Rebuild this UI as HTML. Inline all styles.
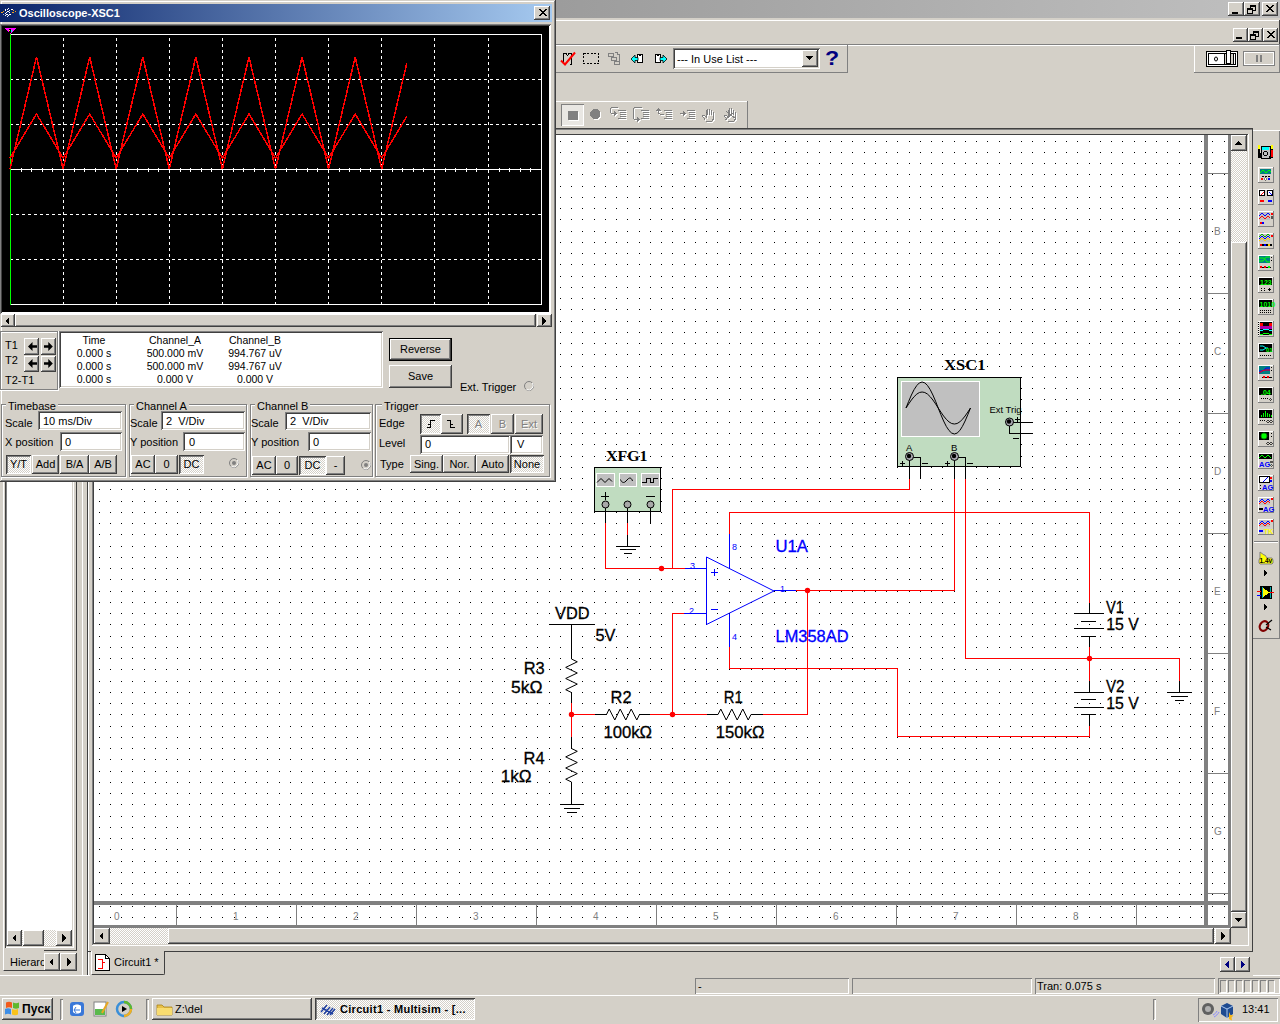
<!DOCTYPE html>
<html><head><meta charset="utf-8">
<style>
*{box-sizing:border-box;margin:0;padding:0}
html,body{width:1280px;height:1024px;overflow:hidden;background:#d4d0c8;font-family:"Liberation Sans",sans-serif;font-size:11px;color:#000;position:relative}
.a{position:absolute}
.btn{position:absolute;background:#d4d0c8;box-shadow:inset -1px -1px #404040,inset 1px 1px #fff,inset -2px -2px #808080,inset 2px 2px #d4d0c8}
.sunk{position:absolute;background:#fff;box-shadow:inset 1px 1px #808080,inset -1px -1px #fff,inset 2px 2px #404040,inset -2px -2px #d4d0c8}
.tb{position:absolute;background:#d4d0c8;box-shadow:inset -1px -1px #808080,inset 1px 1px #fff}
.chk{background-color:#e6e3de;background-image:repeating-conic-gradient(#d4d0c8 0 25%,#fff 0 50%);background-size:2px 2px}
svg{position:absolute;overflow:visible}
</style></head><body>

<!-- ===== MAIN WINDOW ===== -->
<div class="a" style="left:0;top:0;width:1280px;height:18px;background:linear-gradient(to right,#808080,#c0c0c0)"></div>
<div class="a" style="left:0;top:20px;width:1280px;height:1px;background:#fff"></div>
<div class="a" style="left:1279px;top:20px;width:1px;height:25px;background:#404040"></div>
<!-- title buttons -->
<div class="btn" style="left:1228px;top:2px;width:16px;height:14px"></div>
<div class="btn" style="left:1244px;top:2px;width:16px;height:14px"></div>
<div class="btn" style="left:1262px;top:2px;width:16px;height:14px"></div>
<svg style="left:1228px;top:2px" width="50" height="14" shape-rendering="crispEdges" fill="#000">
 <path d="M4 10h6v2h-6z"/>
 <path d="M22 3h6v2h-6zM27 5h1v4h-1zM25 8h2v1h-2zM22 5h1v1h-1zM19 6h6v2h-6zM19 8h1v4h-1zM24 8h1v4h-1zM19 11h6v1h-6z"/>
 <path d="M38 3h2v1h-2zM44 3h2v1h-2zM39 4h2v1h-2zM43 4h2v1h-2zM40 5h4v1h-4zM41 6h2v1h-2zM40 7h4v1h-4zM39 8h2v1h-2zM43 8h2v1h-2zM38 9h2v1h-2zM44 9h2v1h-2z"/>
</svg>
<!-- mdi buttons -->
<div class="btn" style="left:1233px;top:28px;width:15px;height:14px"></div>
<div class="btn" style="left:1248px;top:28px;width:15px;height:14px"></div>
<div class="btn" style="left:1263px;top:28px;width:15px;height:14px"></div>
<svg style="left:1233px;top:28px" width="45" height="14" shape-rendering="crispEdges" fill="#000">
 <path d="M3 9h6v2h-6z"/>
 <path d="M20 3h6v2h-6zM25 5h1v4h-1zM23 8h2v1h-2zM20 5h1v1h-1zM17 6h6v2h-6zM17 8h1v4h-1zM22 8h1v4h-1zM17 11h6v1h-6z"/>
 <path d="M34 3h2v1h-2zM40 3h2v1h-2zM35 4h2v1h-2zM39 4h2v1h-2zM36 5h4v1h-4zM37 6h2v1h-2zM36 7h4v1h-4zM35 8h2v1h-2zM39 8h2v1h-2zM34 9h2v1h-2zM40 9h2v1h-2z"/>
</svg>

<div class="a" style="left:0;top:44px;width:1280px;height:1px;background:#808080"></div>
<div class="a" style="left:0;top:45px;width:1280px;height:1px;background:#fff"></div>
<!-- toolbar 1 -->
<div class="tb" style="left:540px;top:45px;width:308px;height:28px"></div>
<div class="sunk" style="left:673px;top:48px;width:147px;height:21px"></div>
<div class="a" style="left:677px;top:53px;line-height:13px">--- In Use List ---</div>
<div class="btn" style="left:802px;top:50px;width:16px;height:17px"></div>
<svg style="left:806px;top:56px" width="8" height="5" shape-rendering="crispEdges"><path d="M0 0h7L3.5 4z" fill="#000"/></svg>
<div class="a" style="left:825px;top:47px;font-size:21px;font-weight:bold;color:#000080;line-height:22px;transform:scaleX(1.1);transform-origin:left">?</div>
<div class="tb" style="left:1194px;top:45px;width:86px;height:28px"></div>
<!-- toolbar 2 -->
<div class="tb" style="left:540px;top:101px;width:208px;height:28px"></div>
<div class="a" style="left:561px;top:104px;width:23px;height:22px;background:#e9e7e3;box-shadow:inset 1px 1px #808080,inset -1px -1px #fff"></div>
<div class="a" style="left:568px;top:111px;width:10px;height:9px;background:#808080;box-shadow:1px 1px #fff"></div>
<svg style="left:588px;top:106px" width="16" height="16" shape-rendering="crispEdges"><path d="M6 4h4l3 3v4l-3 3h-4l-3-3v-4z" fill="#fff"/><path d="M5 3h4l3 3v4l-3 3h-4l-3-3v-4z" fill="#808080"/></svg>

<div class="a" style="left:88px;top:128px;width:1164px;height:1px;background:#404040"></div>
<div class="a" style="left:88px;top:129px;width:1164px;height:1px;background:#808080"></div>
<div class="a" style="left:88px;top:134px;width:1160px;height:1px;background:#404040"></div>

<!-- canvas frame -->
<div class="a" style="left:88px;top:128px;width:1px;height:847px;background:#fff"></div>
<div class="a" style="left:92px;top:134px;width:1px;height:811px;background:#808080"></div>
<div class="a" style="left:93px;top:134px;width:1px;height:810px;background:#404040"></div>
<div class="a" style="left:94px;top:135px;width:1137px;height:792px;background:#fff"></div>
<svg style="left:0;top:0" width="1280" height="1024" shape-rendering="crispEdges">
<defs><pattern id="gd" width="45" height="45" patternUnits="userSpaceOnUse" x="9" y="6">
<path d="M0 0h1v1h-1zM11 0h1v1h-1zM22 0h1v1h-1zM33 0h1v1h-1zM0 11h1v1h-1zM11 11h1v1h-1zM22 11h1v1h-1zM33 11h1v1h-1zM0 22h1v1h-1zM11 22h1v1h-1zM22 22h1v1h-1zM33 22h1v1h-1zM0 33h1v1h-1zM11 33h1v1h-1zM22 33h1v1h-1zM33 33h1v1h-1z" fill="#000"/>
</pattern></defs>
<rect x="94" y="135" width="1137" height="792" fill="url(#gd)"/>
<g fill="#808080">
 <rect x="94" y="901" width="1137" height="4"/>
 <rect x="1204" y="135" width="4" height="792"/>
 <rect x="94" y="925" width="1137" height="3"/>
 <rect x="1228" y="135" width="3" height="792"/>
</g>
<g stroke="#808080" stroke-width="1">
 <path d="M176.5 905V925M296.5 905V925M416.5 905V925M536.5 905V925M656.5 905V925M776.5 905V925M896.5 905V925M1016.5 905V925M1136.5 905V925"/>
 <path d="M1208 173.5H1229M1208 293.5H1229M1208 413.5H1229M1208 533.5H1229M1208 653.5H1229M1208 773.5H1229M1208 893.5H1229"/>
</g>
</svg>
<div class="a" style="left:0;top:910px;font-size:10px;line-height:13px;color:#808080">
 <span class="a" style="left:114px">0</span><span class="a" style="left:233px">1</span><span class="a" style="left:353px">2</span><span class="a" style="left:473px">3</span><span class="a" style="left:593px">4</span><span class="a" style="left:713px">5</span><span class="a" style="left:833px">6</span><span class="a" style="left:953px">7</span><span class="a" style="left:1073px">8</span>
</div>
<div class="a" style="left:1214px;top:0;font-size:10px;line-height:13px;color:#808080">
 <span class="a" style="top:225px">B</span><span class="a" style="top:345px">C</span><span class="a" style="top:465px">D</span><span class="a" style="top:585px">E</span><span class="a" style="top:705px">F</span><span class="a" style="top:825px">G</span>
</div>
<!-- vscroll -->
<div class="a chk" style="left:1231px;top:135px;width:16px;height:792px"></div>
<div class="btn" style="left:1231px;top:135px;width:16px;height:16px"></div>
<svg style="left:1235px;top:141px" width="8" height="5" shape-rendering="crispEdges"><path d="M0 4h7L3.5 0z" fill="#000"/></svg>
<div class="btn" style="left:1231px;top:242px;width:16px;height:670px"></div>
<div class="btn" style="left:1231px;top:912px;width:16px;height:16px"></div>
<svg style="left:1235px;top:918px" width="8" height="5" shape-rendering="crispEdges"><path d="M0 0h7L3.5 4z" fill="#000"/></svg>
<!-- hscroll -->
<div class="a chk" style="left:94px;top:928px;width:1137px;height:16px"></div>
<div class="btn" style="left:94px;top:928px;width:16px;height:16px"></div>
<svg style="left:99px;top:932px" width="5" height="8" shape-rendering="crispEdges"><path d="M4 0v8L0 4z" fill="#000"/></svg>
<div class="btn" style="left:168px;top:928px;width:1046px;height:16px"></div>
<div class="btn" style="left:1215px;top:928px;width:16px;height:16px"></div>
<svg style="left:1221px;top:932px" width="5" height="8" shape-rendering="crispEdges"><path d="M0 0v8L4 4z" fill="#000"/></svg>
<div class="a" style="left:1231px;top:928px;width:17px;height:17px;background:#d4d0c8"></div>
<div class="a" style="left:1248px;top:134px;width:1px;height:811px;background:#fff"></div>
<div class="a" style="left:92px;top:945px;width:1157px;height:1px;background:#fff"></div>
<div class="a" style="left:1252px;top:128px;width:1px;height:824px;background:#404040"></div>
<div class="a" style="left:88px;top:951px;width:1165px;height:1px;background:#404040"></div>

<!-- ===== CIRCUIT ===== -->
<svg style="left:0;top:0" width="1280" height="1024">
 <!-- wires -->
 <g fill="none" stroke="#f00" stroke-width="1" shape-rendering="crispEdges">
  <path d="M605.5 523V568.5H685"/>
  <path d="M627.5 523V535"/>
  <path d="M909.5 479V489.5H672.5V568.5"/>
  <path d="M729.5 534V512.5H1089.5V603"/>
  <path d="M796 590.5H954.5V479"/>
  <path d="M807.5 590.5V714.5H763"/>
  <path d="M965.5 479V658.5H1179.5V681"/>
  <path d="M729.5 647V668.5H897.5V736.5H1089.5V726"/>
  <path d="M1089.5 647V681"/>
  <path d="M684 613.5H672.5V714.5"/>
  <path d="M650 714.5H707"/>
  <path d="M571.5 703V737"/>
  <path d="M571.5 714.5H595"/>
 </g>
 <g fill="#f00">
  <circle cx="661.5" cy="568.5" r="2.7"/>
  <circle cx="807.5" cy="590.5" r="2.7"/>
  <circle cx="672.5" cy="714.5" r="2.7"/>
  <circle cx="571.5" cy="714.5" r="2.7"/>
  <circle cx="1089.5" cy="658.5" r="2.7"/>
 </g>
 <!-- XFG1 box -->
 <rect x="594.5" y="467.5" width="66" height="44" fill="#c0dcc0" stroke="#000" shape-rendering="crispEdges"/>
 <g shape-rendering="crispEdges" fill="#c0c0c0" stroke="#fff">
  <rect x="596.5" y="473.5" width="18" height="13"/><rect x="619.5" y="473.5" width="17" height="13"/><rect x="641.5" y="473.5" width="18" height="13"/>
 </g>
 <!-- XSC1 box -->
 <rect x="897.5" y="377.5" width="123" height="89" fill="#c0dcc0" stroke="#000" shape-rendering="crispEdges"/>
 <rect x="901.5" y="381.5" width="78" height="55" fill="#c0c0c0" stroke="#fff" shape-rendering="crispEdges"/>
 <!-- black component leads -->
 <g fill="none" stroke="#000" stroke-width="1" shape-rendering="crispEdges">
  <path d="M605.5 504V523M627.5 504V523M650.5 504V523M627.5 535V546"/>
  <path d="M616 546.5H640M620 549.5H636M624 553.5H632"/>
  <path d="M549 624.5H595M571.5 624.5V659M571.5 692.5V703M571.5 737V748.5M571.5 782V804.5"/>
  <path d="M560 804.5H584M564 808.5H580M567 812.5H577"/>
  <path d="M595 714.5H606.5M639.5 714.5H650M707 714.5H718M751 714.5H763"/>
  <path d="M1089.5 603V613.5M1074 613.5H1104M1081 621.5H1096M1074 628.5H1104M1081 636.5H1096M1089.5 636.5V647"/>
  <path d="M1089.5 681V692.5M1074 692.5H1104M1081 699.5H1096M1074 707.5H1104M1081 714.5H1096M1089.5 714.5V726"/>
  <path d="M1179.5 681V692.5M1167 692.5H1192M1171 696.5H1188M1175 700.5H1184"/>
  <path d="M909.5 457V479M920.5 479V457.5H912M954.5 457V479M965.5 479V457.5H957"/>
  <path d="M1010 422.5H1033M1009.5 422V433.5H1033"/>
 </g>
 <g fill="none" stroke="#000" stroke-width="1">
  <polyline points="606.5,714.5 609.2,709.0 614.8,720.0 620.2,709.0 625.8,720.0 631.2,709.0 636.8,720.0 639.5,714.5"/>
  <polyline points="718.0,714.5 720.8,709.0 726.2,720.0 731.8,709.0 737.2,720.0 742.8,709.0 748.2,720.0 751.0,714.5"/>
  <polyline points="571.5,659.0 577.3,661.8 565.7,667.4 577.3,673.0 565.7,678.5 577.3,684.1 565.7,689.7 571.5,692.5"/>
  <polyline points="571.5,748.5 577.3,751.3 565.7,756.9 577.3,762.5 565.7,768.0 577.3,773.6 565.7,779.2 571.5,782.0"/>
 </g>
 <!-- op amp -->
 <g fill="none" stroke="#00f" stroke-width="1">
  <path d="M706.5 557V624.5L774 591z"/>
  <path shape-rendering="crispEdges" d="M685 568.5H706.5M684 613.5H706.5M729.5 534V568M729.5 614V647M774 590.5H796M711 572.5H718M714.5 569V576M711 609.5H718"/>
 </g>
 <g fill="#00f" font-family="Liberation Sans" font-size="9px">
  <text x="690" y="569">3</text><text x="689" y="613.5">2</text><text x="732" y="550">8</text><text x="732" y="640">4</text><text x="780" y="591.5">1</text>
 </g>
 <g fill="#00f" stroke="#00f" stroke-width="0.3" font-family="Liberation Sans" font-size="16.5px">
  <text x="775.5" y="551.5" textLength="32.5" lengthAdjust="spacingAndGlyphs">U1A</text><text x="775.5" y="641.5" textLength="73" lengthAdjust="spacingAndGlyphs">LM358AD</text>
 </g>
 <g fill="#000" stroke="#000" stroke-width="0.3" font-family="Liberation Sans" font-size="16.5px">
  <text x="555" y="618.5" textLength="34.5" lengthAdjust="spacingAndGlyphs">VDD</text>
  <text x="595.5" y="641" textLength="20" lengthAdjust="spacingAndGlyphs">5V</text>
  <text x="523.7" y="673.6" textLength="21" lengthAdjust="spacingAndGlyphs">R3</text>
  <text x="511" y="692.7" textLength="31.5" lengthAdjust="spacingAndGlyphs">5kΩ</text>
  <text x="523.6" y="763.9" textLength="21" lengthAdjust="spacingAndGlyphs">R4</text>
  <text x="500.7" y="782" textLength="31" lengthAdjust="spacingAndGlyphs">1kΩ</text>
  <text x="610.6" y="703.4" textLength="21" lengthAdjust="spacingAndGlyphs">R2</text>
  <text x="603.4" y="737.5" textLength="48.7" lengthAdjust="spacingAndGlyphs">100kΩ</text>
  <text x="723.8" y="703.4" textLength="19" lengthAdjust="spacingAndGlyphs">R1</text>
  <text x="715.7" y="737.5" textLength="48.7" lengthAdjust="spacingAndGlyphs">150kΩ</text>
  <text x="1106" y="613.2" textLength="18" lengthAdjust="spacingAndGlyphs">V1</text>
  <text x="1106.2" y="629.8" textLength="32.6" lengthAdjust="spacingAndGlyphs">15 V</text>
  <text x="1106" y="692" textLength="18.5" lengthAdjust="spacingAndGlyphs">V2</text>
  <text x="1106.2" y="708.6" textLength="32.6" lengthAdjust="spacingAndGlyphs">15 V</text>
 </g>
 <!-- XFG1 -->
 <text x="606" y="460.5" font-family="Liberation Serif" font-weight="bold" font-size="14.5px" textLength="41.5" lengthAdjust="spacingAndGlyphs">XFG1</text>
 <g fill="none" stroke="#000" stroke-width="1">
  <path d="M597 482.5l4-4l4 4l4-4l3 3"/>
  <path d="M620.5 479.5c1 3 3 3.5 4.5 2.5l3-3c1.5-1.5 3.5-1.5 4.5 2"/>
  <path shape-rendering="crispEdges" d="M642 482.5h4.5v-4h3.5v4h3v-4h4.5"/>
  <path shape-rendering="crispEdges" d="M601 496.5h8M605.5 492v8M646 496.5h9"/>
 </g>
 <g fill="#a8a8a8" stroke="#000" stroke-width="1">
  <circle cx="605.5" cy="504.5" r="3.5"/><circle cx="627.5" cy="504.5" r="3.5"/><circle cx="650.5" cy="504.5" r="3.5"/>
 </g>
 <!-- XSC1 -->
 <text x="944" y="370" font-family="Liberation Serif" font-weight="bold" font-size="14.5px" textLength="41.5" lengthAdjust="spacingAndGlyphs">XSC1</text>
 <g fill="none" stroke="#000" stroke-width="1">
  <polyline points="906.0,408.0 908.7,401.3 911.4,395.0 914.1,389.6 916.8,385.5 919.4,382.9 922.1,382.0 924.8,382.9 927.5,385.5 930.2,389.6 932.9,395.0 935.6,401.3 938.2,408.0 940.9,414.7 943.6,421.0 946.3,426.4 949.0,430.5 951.7,433.1 954.4,434.0 957.1,433.1 959.8,430.5 962.4,426.4 965.1,421.0 967.8,414.7 970.5,408.0"/>
  <polyline points="906.0,408.0 908.7,403.9 911.4,400.0 914.1,396.7 916.8,394.1 919.4,392.5 922.1,392.0 924.8,392.5 927.5,394.1 930.2,396.7 932.9,400.0 935.6,403.9 938.2,408.0 940.9,412.1 943.6,416.0 946.3,419.3 949.0,421.9 951.7,423.5 954.4,424.0 957.1,423.5 959.8,421.9 962.4,419.3 965.1,416.0 967.8,412.1 970.5,408.0"/>
 </g>
 <g font-family="Liberation Sans" font-size="9.5px" fill="#000">
  <text x="989.5" y="412.5" textLength="32" lengthAdjust="spacingAndGlyphs">Ext Trig</text>
  <text x="906" y="451">A</text><text x="951" y="451">B</text>
 </g>
 <g fill="none" stroke="#000" stroke-width="1" shape-rendering="crispEdges">
  <path d="M900 463.5h5M902.5 461v5M922 463.5h6M945 463.5h5M947.5 461v5M967 463.5h6M1015 419.5h5M1017.5 417v5M1013 438.5h6"/>
 </g>
 <g fill="#a8a8b0" stroke="#000" stroke-width="1">
  <circle cx="909.5" cy="456.5" r="4"/><circle cx="954.5" cy="456.5" r="4"/><circle cx="1009.5" cy="422" r="4"/>
 </g>
 <g fill="#000"><circle cx="909" cy="456" r="2.2"/><circle cx="954" cy="456" r="2.2"/><circle cx="1009" cy="421.5" r="2.2"/></g>
</svg>

<!-- right instrument toolbar -->
<div class="a" style="left:1253px;top:130px;width:27px;height:509px;box-shadow:inset 0 1px #fff,inset -1px -1px #808080"></div>

<!-- left panel -->
<div class="a" style="left:0;top:481px;width:77px;height:470px;box-shadow:inset -1px 0 #404040,inset 3px 0 #d4d0c8,inset 4px 0 #fff"></div>
<div class="a" style="left:43px;top:950px;width:34px;height:1px;background:#404040"></div>
<div class="sunk" style="left:5px;top:481px;width:69px;height:467px;box-shadow:inset 1px 0 #404040,inset -1px -1px #fff,inset -2px -2px #d4d0c8,inset 2px 0 #808080"></div>
<div class="a chk" style="left:7px;top:930px;width:64px;height:16px"></div>
<div class="btn" style="left:7px;top:930px;width:15px;height:16px"></div>
<svg style="left:12px;top:934px" width="5" height="8" shape-rendering="crispEdges"><path d="M4 0v8L0 4z" fill="#000"/></svg>
<div class="btn" style="left:23px;top:930px;width:21px;height:16px"></div>
<div class="btn" style="left:56px;top:930px;width:16px;height:16px"></div>
<svg style="left:62px;top:934px" width="5" height="8" shape-rendering="crispEdges"><path d="M0 0v8L4 4z" fill="#000"/></svg>
<div class="a" style="left:3px;top:950px;width:41px;height:21px;background:#d4d0c8;border-bottom:1px solid #404040;border-left:1px solid #fff"></div>
<div class="a" style="left:10px;top:956px;line-height:13px;width:34px;overflow:hidden;white-space:nowrap">Hierarchy</div>
<div class="btn" style="left:44px;top:953px;width:16px;height:18px"></div>
<svg style="left:49px;top:958px" width="5" height="8" shape-rendering="crispEdges"><path d="M4 0v8L0 4z" fill="#000"/></svg>
<div class="btn" style="left:60px;top:953px;width:17px;height:18px"></div>
<svg style="left:67px;top:958px" width="5" height="8" shape-rendering="crispEdges"><path d="M0 0v8L4 4z" fill="#000"/></svg>
<!-- splitter -->
<div class="a" style="left:82px;top:481px;width:1px;height:494px;background:#fff"></div>
<div class="a" style="left:87px;top:481px;width:1px;height:494px;background:#404040"></div>

<!-- tabs -->
<div class="a" style="left:91px;top:951px;width:74px;height:24px;background:#d4d0c8;border-right:1px solid #404040;border-bottom:1px solid #404040;border-left:1px solid #fff;border-bottom-right-radius:2px"></div>
<div class="a" style="left:114px;top:956px;line-height:13px">Circuit1 *</div>
<svg style="left:95px;top:954px" width="16" height="18" shape-rendering="crispEdges"><path d="M0.5 0.5h10l4 4v12h-14z" fill="#fff" stroke="#000"/><path d="M10.5 0.5v4h4" fill="none" stroke="#000"/><path d="M2.5 5.5h5v9h-5M8 8h2" stroke="#f00" fill="none"/></svg>
<div class="btn" style="left:1220px;top:957px;width:15px;height:15px"></div>
<svg style="left:1225px;top:960px" width="5" height="9" shape-rendering="crispEdges"><path d="M4 0v9L0 4.5z" fill="#000080"/></svg>
<div class="btn" style="left:1235px;top:957px;width:15px;height:15px"></div>
<svg style="left:1241px;top:960px" width="5" height="9" shape-rendering="crispEdges"><path d="M0 0v9L4 4.5z" fill="#000080"/></svg>
<div class="a" style="left:0;top:975px;width:90px;height:1px;background:#fff"></div>
<div class="a" style="left:1253px;top:975px;width:27px;height:1px;background:#fff"></div>

<!-- status bar -->
<div class="a" style="left:695px;top:978px;width:154px;height:16px;box-shadow:inset 1px 1px #808080,inset -1px -1px #fff"></div>
<div class="a" style="left:698px;top:980px;line-height:13px">-</div>
<div class="a" style="left:852px;top:978px;width:180px;height:16px;box-shadow:inset 1px 1px #808080,inset -1px -1px #fff"></div>
<div class="a" style="left:1035px;top:978px;width:180px;height:16px;box-shadow:inset 1px 1px #808080,inset -1px -1px #fff"></div>
<div class="a" style="left:1037px;top:980px;line-height:13px">Tran: 0.075 s</div>
<div class="a" style="left:1218px;top:978px;width:62px;height:16px;box-shadow:inset 1px 1px #808080,inset -1px -1px #fff"></div>
<svg style="left:1220px;top:980px" width="60" height="13" shape-rendering="crispEdges"><g fill="none" stroke-width="1"><path d="M0.5 12V0.5H6M8.5 12V0.5H14M16.5 12V0.5H22M24.5 12V0.5H30M32.5 12V0.5H38M40.5 12V0.5H46M48.5 12V0.5H54" stroke="#808080"/><path d="M6.5 1V12.5H1M14.5 1V12.5H9M22.5 1V12.5H17M30.5 1V12.5H25M38.5 1V12.5H33M46.5 1V12.5H41M54.5 1V12.5H49" stroke="#fff"/></g></svg>

<!-- toolbar icons -->
<svg style="left:556px;top:48px" width="120" height="22" shape-rendering="crispEdges">
 <path d="M7.5 16V5.5h2.5l1.5 2 1.5-2h2.5V16h-2" fill="none" stroke="#000"/>
 <path d="M5 12.5l4 4l10-12" fill="none" stroke="#f00" stroke-width="2" shape-rendering="auto"/>
 <path d="M27.5 5.5h15v10h-15z" fill="none" stroke="#000" stroke-dasharray="2 1.5"/>
 <g fill="none" stroke="#808080"><path d="M52.5 5.5h5v3h-5zM55.5 9.5h5v3h-5zM58.5 13.5h5v3h-5zM59 4.5h2.5v2h2v6"/></g>
 <g fill="#fff" stroke="#000"><path d="M81.5 6.5h1.5l1 1.5 1-1.5h1.5v8h-5z"/><path d="M99.5 6.5h1.5l1 1.5 1-1.5h1.5v8h-5z"/></g>
 <path d="M75 11l4-4v2.5h3v3h-3V15z" fill="#0ff" stroke="#000" stroke-width="0.8" shape-rendering="auto"/>
 <path d="M111 11l-4-4v2.5h-3v3h3V15z" fill="#0ff" stroke="#000" stroke-width="0.8" shape-rendering="auto"/>
</svg>
<svg style="left:600px;top:104px" width="150" height="20" shape-rendering="crispEdges">
 <g transform="translate(1,1)"><path d="M11 3.5h7M10.5 4v5M11 9.5h4M18 6.5h8M20 8.5h6M20 10.5h6M20 12.5h6M18 14.5h8 M34 3.5h8M33.5 4v11M34 15.5h3M41 6.5h8M43 8.5h6M43 10.5h6M43 12.5h6M41 14.5h8 M58.5 6v3.5M59 9.5h1M60 10.5h4M64 6.5h8M66 8.5h6M66 10.5h6M66 12.5h6M64 14.5h8 M80 9.5h4M87 6.5h8M89 8.5h6M89 10.5h6M89 12.5h6M87 14.5h8 M105.5 16.5l-3-4.5 1.5-1 2 2V5.5M107.5 10.5V4.5M109.5 10.5V4.5M111.5 11V5.5M113.5 12V8M113.5 12v3l-1.5 2h-6 M127.5 16.5l-3-4.5 1.5-1 2 2V5.5M129.5 10.5V3.5M131.5 10.5V3.5M133.5 11V5.5M135.5 12V8M135.5 12v3l-1.5 2h-6M126 7l10 8M125 16l9-8" stroke="#fff" fill="none"/><path d="M14 6.5l3 3-3 3z M37 12.5l3 3-3 3z M56 6.5l2.5-3 2.5 3z M83 6.5l3 3-3 3z" fill="#fff"/></g>
 <path d="M11 3.5h7M10.5 4v5M11 9.5h4M18 6.5h8M20 8.5h6M20 10.5h6M20 12.5h6M18 14.5h8 M34 3.5h8M33.5 4v11M34 15.5h3M41 6.5h8M43 8.5h6M43 10.5h6M43 12.5h6M41 14.5h8 M58.5 6v3.5M59 9.5h1M60 10.5h4M64 6.5h8M66 8.5h6M66 10.5h6M66 12.5h6M64 14.5h8 M80 9.5h4M87 6.5h8M89 8.5h6M89 10.5h6M89 12.5h6M87 14.5h8 M105.5 16.5l-3-4.5 1.5-1 2 2V5.5M107.5 10.5V4.5M109.5 10.5V4.5M111.5 11V5.5M113.5 12V8M113.5 12v3l-1.5 2h-6 M127.5 16.5l-3-4.5 1.5-1 2 2V5.5M129.5 10.5V3.5M131.5 10.5V3.5M133.5 11V5.5M135.5 12V8M135.5 12v3l-1.5 2h-6M126 7l10 8M125 16l9-8" stroke="#808080" fill="none"/><path d="M14 6.5l3 3-3 3z M37 12.5l3 3-3 3z M56 6.5l2.5-3 2.5 3z M83 6.5l3 3-3 3z" fill="#808080"/>
</svg>
<!-- simulate switch -->
<svg style="left:1206px;top:50px" width="72" height="18" shape-rendering="crispEdges">
 <rect x="0.5" y="1.5" width="31" height="15" fill="#fff" stroke="#000"/>
 <rect x="2.5" y="3.5" width="27" height="11" fill="none" stroke="#000"/>
 <ellipse cx="10" cy="9" rx="1.5" ry="2" fill="none" stroke="#000" stroke-width="1" shape-rendering="auto"/>
 <path d="M18 3.5v11h9V3.5z" fill="#d4d0c8" stroke="#000"/>
 <path d="M20.5 0.5h4v13h-4z" fill="#fff" stroke="#000"/>
 <rect x="37.5" y="1.5" width="31" height="14" fill="none" stroke="#808080"/>
 <rect x="38.5" y="2.5" width="29" height="12" fill="none" stroke="#fff"/>
 <path d="M51 5v7M55 5v7" stroke="#808080" stroke-width="1.5"/>
</svg>

<!-- right instrument icons -->
<svg style="left:1254px;top:140px" width="26" height="500" shape-rendering="crispEdges">
 <defs>
  <g id="ib"><rect x="4" y="0" width="15" height="15" fill="#d4d0c8"/><path d="M4.5 15V0.5H19" stroke="#fff" fill="none"/><path d="M19.5 0V15.5H4" stroke="#808080" fill="none"/></g>
 </defs>
 <!-- 0 multimeter -->
 <g transform="translate(0,5)"><rect x="7" y="1" width="9" height="12" fill="#c0c0c0" stroke="#000"/><rect x="8" y="2" width="7" height="3" fill="#0ff"/><circle cx="11.5" cy="8.5" r="2" fill="none" stroke="#000"/><path d="M5 0v4M18 0v4" stroke="#ff0" stroke-width="1.5"/><path d="M5 4v8h3M18 4v8h-3" stroke="#000" stroke-width="1.5"/><path d="M18 5v7" stroke="#f00" stroke-width="1.5"/></g>
 <!-- 1 func gen -->
 <g transform="translate(0,27)"><use href="#ib"/><rect x="6" y="2" width="11" height="5" fill="#008080"/><path d="M6 6l3-3 3 3 3-3 2 2" stroke="#0f0" fill="none" shape-rendering="auto"/><path d="M8 9h2M11 9h2M14 9h2" stroke="#000"/><circle cx="8" cy="12" r="1.2" fill="#f00"/><circle cx="11.5" cy="12" r="1.2" fill="#fff" stroke="#000" stroke-width=".5"/><circle cx="15" cy="12" r="1.2" fill="#00f"/></g>
 <!-- 2 wattmeter -->
 <g transform="translate(0,49)"><use href="#ib"/><rect x="5.5" y="1.5" width="5" height="5" fill="#fff" stroke="#000"/><rect x="13.5" y="1.5" width="5" height="5" fill="#fff" stroke="#000"/><path d="M7 6l3-3" stroke="#f00" shape-rendering="auto"/><path d="M15 3l3 3" stroke="#00f" shape-rendering="auto"/><path d="M6 12h4" stroke="#f00" stroke-width="2"/><path d="M14 12h4" stroke="#00f" stroke-width="2"/></g>
 <!-- 3 osc -->
 <g transform="translate(0,71)"><use href="#ib"/><rect x="5" y="1" width="11" height="8" fill="#c0c0c0"/><path d="M5 5l3-3 3 3 3-3 2 2" stroke="#00f" fill="none" shape-rendering="auto"/><path d="M5 8l3-3 3 3 3-3 2 2" stroke="#f00" fill="none" shape-rendering="auto"/><path d="M17 3h2M18 2v2" stroke="#f00" stroke-width="1.5"/><circle cx="18" cy="6.5" r="1" fill="none" stroke="#000" stroke-width=".6"/><path d="M6 12h4" stroke="#f00" stroke-width="2"/><path d="M8 12h2" stroke="#00f" stroke-width="2"/></g>
 <!-- 4 4ch osc -->
 <g transform="translate(0,93)"><use href="#ib"/><rect x="5" y="1" width="11" height="8" fill="#c0c0c0"/><path d="M5 4l3-3 3 3 3-3 2 2" stroke="#0a0" fill="none" shape-rendering="auto"/><path d="M5 6l3-3 3 3 3-3 2 2" stroke="#00f" fill="none" shape-rendering="auto"/><path d="M5 8l3-3 3 3 3-3 2 2" stroke="#fc0" fill="none" shape-rendering="auto"/><path d="M17 3h2M18 2v2" stroke="#f00" stroke-width="1.5"/><path d="M6 12h12" stroke="#000" stroke-width="1.5"/><circle cx="7" cy="12" r="1" fill="#f00"/><circle cx="11" cy="12" r="1" fill="#00f"/><circle cx="15" cy="12" r="1" fill="#fc0"/></g>
 <!-- 5 bode -->
 <g transform="translate(0,115)"><use href="#ib"/><rect x="5" y="1" width="11" height="7" fill="#008080"/><path d="M5 3h5l3 4h3M5 6h4l3-4h4" stroke="#0f0" fill="none" shape-rendering="auto"/><path d="M17 2v1M17 5v1" stroke="#000"/><path d="M6 12h11" stroke="#000"/><circle cx="7" cy="12" r="1" fill="#f00"/><circle cx="11" cy="12" r="1" fill="#f00"/><circle cx="15" cy="12" r="1" fill="#0f0"/></g>
 <!-- 6 counter 123 -->
 <g transform="translate(0,137)"><use href="#ib"/><rect x="5" y="1" width="13" height="7" fill="#000"/><text x="6" y="7.5" font-family="Liberation Sans" font-weight="bold" font-size="7px" fill="#0f0">123</text><path d="M7 11h1M10 11h1M7 13h1M10 13h1M15 11v3M13.5 12.5h3" stroke="#000"/></g>
 <!-- 7 word gen 1010 -->
 <g transform="translate(0,159)"><use href="#ib"/><rect x="5" y="1" width="13" height="7" fill="#000"/><text x="5.5" y="7.5" font-family="Liberation Sans" font-weight="bold" font-size="7px" fill="#0f0">1010</text><path d="M6 11h12M6 13h12" stroke="#000" stroke-dasharray="1 1"/></g>
 <!-- 8 logic analyzer -->
 <g transform="translate(0,181)"><use href="#ib"/><path d="M4.5 1v14" stroke="#000" stroke-dasharray="1 1"/><rect x="6" y="1" width="12" height="13" fill="#000"/><path d="M6 2h3v3h6v-3h3v3h-12z" fill="#f00"/><rect x="6" y="5" width="12" height="3" fill="#a0a"/><path d="M6 9h3l1-1h4l1 1h3" stroke="#0ff" fill="none"/><path d="M6 13h3l1-1h4l1 1h3" stroke="#0f0" fill="none"/></g>
 <!-- 9 logic converter -->
 <g transform="translate(0,203)"><use href="#ib"/><rect x="5" y="1" width="13" height="8" fill="#000"/><path d="M6 3h3l3 2-3 2h-3M12 5h2" stroke="#0ff" fill="none" shape-rendering="auto"/><text x="12" y="9" font-family="Liberation Sans" font-weight="bold" font-size="6px" fill="#0f0">01</text><path d="M6 12h12" stroke="#000" stroke-dasharray="1 1"/></g>
 <!-- 10 IV -->
 <g transform="translate(0,225)"><use href="#ib"/><rect x="5" y="1" width="11" height="8" fill="#008080"/><path d="M5 6h4l3-3h4M5 8l5-3h6" stroke="#00f" fill="none" shape-rendering="auto"/><path d="M5 8l3-2 3-1h5" stroke="#f00" fill="none" shape-rendering="auto"/><path d="M17 2v1M17 5v1" stroke="#000"/><path d="M8 12h10" stroke="#000"/><circle cx="10" cy="12" r="1" fill="#f00"/><circle cx="14" cy="12" r="1" fill="#f00"/></g>
 <!-- 11 distortion -->
 <g transform="translate(0,247)"><use href="#ib"/><rect x="5" y="1" width="13" height="7" fill="#000"/><text x="7" y="7.5" font-family="Liberation Sans" font-weight="bold" font-size="7px" fill="#0f0">.04</text><path d="M7 11h8" stroke="#000" stroke-dasharray="1 1"/><circle cx="16.5" cy="12.5" r="1.3" fill="none" stroke="#000" stroke-width=".7"/></g>
 <!-- 12 spectrum -->
 <g transform="translate(0,269)"><use href="#ib"/><rect x="5" y="1" width="13" height="8" fill="#000"/><path d="M7 8v-2M9 8v-4M11 8v-6M13 8v-4M15 8v-3M17 8v-2" stroke="#0f0"/><path d="M6 11h6" stroke="#000" stroke-dasharray="1 1"/><circle cx="14" cy="12.5" r="1.2" fill="none" stroke="#000" stroke-width=".7"/><circle cx="17" cy="12.5" r="1.2" fill="none" stroke="#000" stroke-width=".7"/></g>
 <!-- 13 network -->
 <g transform="translate(0,291)"><use href="#ib"/><rect x="5" y="1" width="10" height="8" fill="#000"/><circle cx="10" cy="5" r="3" fill="#0f0" stroke="#080" shape-rendering="auto"/><path d="M17 2v1M17 5v1" stroke="#000"/><circle cx="14" cy="12.5" r="1.2" fill="none" stroke="#000" stroke-width=".7"/><circle cx="17" cy="12.5" r="1.2" fill="none" stroke="#000" stroke-width=".7"/></g>
 <!-- 14 AG fg -->
 <g transform="translate(0,313)"><use href="#ib"/><rect x="5" y="1" width="13" height="5" fill="#000"/><path d="M5 5l3-3 3 3 3-3 3 3" stroke="#0f0" fill="none" shape-rendering="auto"/><text x="5" y="14" font-family="Liberation Sans" font-weight="bold" font-size="7.5px" fill="#00f">AG</text><circle cx="17.5" cy="9" r="1" fill="none" stroke="#000" stroke-width=".6"/><circle cx="17.5" cy="12.5" r="1" fill="none" stroke="#000" stroke-width=".6"/></g>
 <!-- 15 AG dmm -->
 <g transform="translate(0,335)"><use href="#ib"/><rect x="5.5" y="1.5" width="10" height="6" fill="#fff" stroke="#000"/><path d="M9 7l5-5" stroke="#00f" shape-rendering="auto"/><path d="M17 2v2" stroke="#f00" stroke-width="1.5"/><path d="M17 5v2" stroke="#00f" stroke-width="1.5"/><text x="8" y="14.5" font-family="Liberation Sans" font-weight="bold" font-size="7.5px" fill="#00f">AG</text><path d="M6 10v1M6 13v1" stroke="#000"/></g>
 <!-- 16 AG scope -->
 <g transform="translate(0,357)"><use href="#ib"/><rect x="5" y="1" width="11" height="7" fill="#c0c0c0"/><path d="M5 5l3-3 3 3 3-3 2 2" stroke="#00f" fill="none" shape-rendering="auto"/><path d="M5 7l3-3 3 3 3-3 2 2" stroke="#f00" fill="none" shape-rendering="auto"/><path d="M17 2h2M18 1v2" stroke="#f00" stroke-width="1.5"/><text x="9" y="14.5" font-family="Liberation Sans" font-weight="bold" font-size="7.5px" fill="#00f">AG</text><path d="M5 12h4" stroke="#000" stroke-width="1.5"/></g>
 <!-- 17 TK scope -->
 <g transform="translate(0,379)"><use href="#ib"/><rect x="5" y="1" width="11" height="7" fill="#c0c0c0"/><path d="M5 5l3-3 3 3 3-3 2 2" stroke="#00f" fill="none" shape-rendering="auto"/><path d="M5 7l3-3 3 3 3-3 2 2" stroke="#f00" fill="none" shape-rendering="auto"/><path d="M17 2h2M18 1v2" stroke="#f00" stroke-width="1.5"/><text x="10" y="14.5" font-family="Liberation Sans" font-weight="bold" font-size="7px" fill="#ff0">TK</text><path d="M5 12h4" stroke="#00f" stroke-width="1.5"/></g>
 <!-- separator -->
 <path d="M0 401.5H24" stroke="#808080"/><path d="M0 402.5H24" stroke="#fff"/>
 <!-- probe -->
 <g transform="translate(0,411)"><path d="M6 1l4 3h1l2 3h5l1 2v3l-1 1h-12l-1-1v-3l1-2z" fill="#ff0" stroke="#808080" shape-rendering="auto"/><text x="5.5" y="12" font-family="Liberation Sans" font-weight="bold" font-size="6.5px" fill="#000">1.4v</text></g>
 <path d="M10 430v6l3-3z" fill="#000"/>
 <!-- VI -->
 <g transform="translate(0,446)"><rect x="6" y="0" width="12" height="13" fill="#000"/><path d="M8 1v11M16 1v11" stroke="#0aa"/><path d="M9 2v9l7-4.5z" fill="#ff0"/><path d="M3 5h4" stroke="#f00"/><path d="M3 9h4" stroke="#00f"/><path d="M16 6.5h4" stroke="#f00"/></g>
 <path d="M10 464v6l3-3z" fill="#000"/>
 <!-- clip -->
 <g transform="translate(0,478)" shape-rendering="auto"><ellipse cx="10" cy="8" rx="4" ry="5" fill="none" stroke="#800000" stroke-width="2.2" transform="rotate(30 10 8)"/><path d="M12 7l6-5M12 9l5 3" stroke="#000" stroke-width="1.2" fill="none"/></g>
</svg>

<!-- ===== SCOPE WINDOW ===== -->
<div class="a" id="scope" style="left:0;top:0;width:556px;height:482px;background:#d4d0c8;box-shadow:inset -1px -1px #404040,inset 1px 1px #d4d0c8,inset -2px -2px #808080,inset 2px 2px #fff">
 <div class="a" style="left:0;top:4px;width:552px;height:18px;background:linear-gradient(to right,#0a246a,#a6caf0)"></div>
 <div class="a" style="left:19px;top:4px;height:18px;line-height:18px;color:#fff;font-weight:bold;font-size:11px">Oscilloscope-XSC1</div>
 <svg style="left:0;top:0" width="20" height="20" shape-rendering="crispEdges"><g fill="#fff"><rect x="8" y="8" width="1" height="1"/><rect x="5" y="9" width="1" height="2"/><rect x="7" y="9" width="1" height="1"/><rect x="9" y="10" width="1" height="1"/><rect x="11" y="9" width="2" height="1"/><rect x="7" y="11" width="2" height="1"/><rect x="6" y="12" width="1" height="1"/><rect x="9" y="12" width="1" height="1"/><rect x="5" y="13" width="1" height="1"/><rect x="6" y="14" width="2" height="1"/><rect x="9" y="14" width="2" height="1"/><rect x="5" y="15" width="1" height="1"/><rect x="8" y="15" width="1" height="1"/><rect x="7" y="16" width="1" height="1"/><rect x="3" y="14" width="1" height="1" fill="#b0b8e0"/></g><g fill="#f0a020"><rect x="1" y="12" width="2" height="1"/><rect x="3" y="11" width="1" height="1"/><rect x="13" y="10" width="1" height="1"/><rect x="12" y="12" width="2" height="1"/><rect x="15" y="11" width="1" height="1"/></g></svg>
 <div class="btn" style="left:534px;top:6px;width:16px;height:14px"></div>
 <svg style="left:538px;top:8px" width="10" height="9" shape-rendering="crispEdges"><path d="M1 1h2v1h-2zM7 1h2v1h-2zM2 2h2v1h-2zM6 2h2v1h-2zM3 3h4v1h-4zM4 4h2v1h-2zM3 5h4v1h-4zM2 6h2v1h-2zM6 6h2v1h-2zM1 7h2v1h-2zM7 7h2v1h-2z" fill="#000"/></svg>
 <div class="a" style="left:0;top:24px;width:551px;height:290px;box-shadow:inset 1px 1px #808080,inset -1px -1px #fff,inset 2px 2px #404040,inset -2px -2px #fff;background:#000"></div>
 <svg style="left:0;top:0" width="556" height="330" shape-rendering="crispEdges">
  <g stroke="#fff" stroke-width="1" fill="none">
   <path d="M10 34.5H541.5M541.5 34V305M10 304.5H541.5M10 169.5H541"/>
   <path stroke-dasharray="3 3" d="M10 79.5H541M10 124.5H541M10 214.5H541M10 259.5H541"/>
   <path stroke-dasharray="3 3" stroke-dashoffset="-4" d="M63.5 34V304M116.5 34V304M169.5 34V304M222.5 34V304M275.5 34V304M328.5 34V304M381.5 34V304M434.5 34V304M488.5 34V304"/>
   <path d="M21.5 168V172M31.5 168V172M42.5 168V172M52.5 168V172M74.5 168V172M84.5 168V172M95.5 168V172M105.5 168V172M127.5 168V172M137.5 168V172M148.5 168V172M158.5 168V172M180.5 168V172M190.5 168V172M201.5 168V172M211.5 168V172M233.5 168V172M243.5 168V172M254.5 168V172M264.5 168V172M286.5 168V172M296.5 168V172M307.5 168V172M317.5 168V172M339.5 168V172M349.5 168V172M360.5 168V172M370.5 168V172M392.5 168V172M402.5 168V172M413.5 168V172M423.5 168V172M445.5 168V172M455.5 168V172M466.5 168V172M476.5 168V172M499.5 168V172M509.5 168V172M520.5 168V172M530.5 168V172"/>
  </g>
  <path d="M10.5 34V305" stroke="#0f0" stroke-width="1"/>
  <g fill="none" stroke="#f00" stroke-width="1.5" shape-rendering="crispEdges">
   <polyline points="10.0,169.0 36.5,57.0 63.1,169.0 89.7,57.0 116.2,169.0 142.8,57.0 169.3,169.0 195.8,57.0 222.4,169.0 249.0,57.0 275.5,169.0 302.1,57.0 328.6,169.0 355.2,57.0 381.7,169.0 406.8,63.1"/>
   <polyline points="10.0,158.0 36.5,114.0 63.1,158.0 89.7,114.0 116.2,158.0 142.8,114.0 169.3,158.0 195.8,114.0 222.4,158.0 249.0,114.0 275.5,158.0 302.1,114.0 328.6,158.0 355.2,114.0 381.7,158.0 406.8,116.4"/>
  </g>
  <path d="M4 28H17L10.5 34z" fill="#f0f"/>
  <rect x="9" y="29" width="2" height="4" fill="#000"/><rect x="9" y="30" width="1" height="1" fill="#ff0"/><rect x="11" y="30" width="1" height="2" fill="#0ff"/>
 </svg>
 <!-- scrollbar -->
 <div class="btn" style="left:1px;top:314px;width:14px;height:13px"></div>
 <svg style="left:5px;top:317px" width="5" height="8" shape-rendering="crispEdges"><path d="M4 0v8L0 4z" fill="#000"/></svg>
 <div class="btn" style="left:15px;top:314px;width:521px;height:13px"></div>
 <div class="btn" style="left:537px;top:314px;width:15px;height:13px"></div>
 <svg style="left:542px;top:317px" width="5" height="8" shape-rendering="crispEdges"><path d="M0 0v8L4 4z" fill="#000"/></svg>

 <!-- T panel -->
 <div class="a" style="left:0;top:331px;width:59px;height:60px;box-shadow:inset -1px -1px #fff,inset -2px -2px #808080,inset 1px 1px #808080,inset 2px 2px #fff"></div>
 <div class="a" style="left:5px;top:339px;line-height:13px">T1</div>
 <div class="a" style="left:5px;top:354px;line-height:13px">T2</div>
 <div class="a" style="left:5px;top:374px;line-height:13px">T2-T1</div>
 <div class="btn" style="left:24px;top:338px;width:15px;height:17px"></div>
 <div class="btn" style="left:41px;top:338px;width:15px;height:17px"></div>
 <div class="btn" style="left:24px;top:356px;width:15px;height:16px"></div>
 <div class="btn" style="left:41px;top:356px;width:15px;height:16px"></div>
 <svg style="left:0;top:0" width="60" height="380">
  <path d="M28 346.5L32.5 342V345.2H37V347.8H32.5V351z M28 363.5L32.5 359V362.2H37V364.8H32.5V368z" fill="#000"/>
  <path d="M52.8 346.5L48.3 342V345.2H44V347.8H48.3V351z M52.8 363.5L48.3 359V362.2H44V364.8H48.3V368z" fill="#000"/>
 </svg>
 <!-- data box -->
 <div class="sunk" style="left:59px;top:331px;width:324px;height:57px"></div>
 <div class="a" style="left:0;top:334px;font-size:10.5px;line-height:13px;text-align:center;white-space:nowrap">
  <div class="a" style="left:54px;width:80px">Time<br>0.000 s<br>0.000 s<br>0.000 s</div>
  <div class="a" style="left:135px;width:80px">Channel_A<br>500.000 mV<br>500.000 mV<br>0.000 V</div>
  <div class="a" style="left:215px;width:80px">Channel_B<br>994.767 uV<br>994.767 uV<br>0.000 V</div>
 </div>
 <div class="btn" style="left:389px;top:338px;width:63px;height:23px;box-shadow:inset 1px 1px #000,inset -1px -1px #000,inset -2px -2px #404040,inset 2px 2px #fff,inset -3px -3px #808080"></div>
 <div class="a" style="left:389px;top:338px;width:63px;line-height:22px;text-align:center">Reverse</div>
 <div class="btn" style="left:389px;top:365px;width:63px;height:23px"></div>
 <div class="a" style="left:389px;top:365px;width:63px;line-height:22px;text-align:center">Save</div>
 <div class="a" style="left:460px;top:381px;line-height:13px">Ext. Trigger</div>
 <svg style="left:523px;top:380px" width="12" height="12"><circle cx="6" cy="6" r="4.5" fill="#d4d0c8" stroke="#808080"/><path d="M9.5 3a4.6 4.6 0 0 1-6 6.5" stroke="#fff" fill="none"/></svg>

 <!-- group boxes -->
 <div class="a" style="left:1px;top:404px;width:125px;height:73px;border:1px solid #808080;box-shadow:inset 1px 1px #fff,1px 1px #fff"></div>
 <div class="a" style="left:6px;top:400px;padding:0 2px;background:#d4d0c8;line-height:13px">Timebase</div>
 <div class="a" style="left:129px;top:404px;width:118px;height:73px;border:1px solid #808080;box-shadow:inset 1px 1px #fff,1px 1px #fff"></div>
 <div class="a" style="left:134px;top:400px;padding:0 2px;background:#d4d0c8;line-height:13px">Channel A</div>
 <div class="a" style="left:250px;top:404px;width:123px;height:73px;border:1px solid #808080;box-shadow:inset 1px 1px #fff,1px 1px #fff"></div>
 <div class="a" style="left:255px;top:400px;padding:0 2px;background:#d4d0c8;line-height:13px">Channel B</div>
 <div class="a" style="left:375px;top:404px;width:175px;height:73px;border:1px solid #808080;box-shadow:inset 1px 1px #fff,1px 1px #fff"></div>
 <div class="a" style="left:382px;top:400px;padding:0 2px;background:#d4d0c8;line-height:13px">Trigger</div>

 <!-- timebase -->
 <div class="a" style="left:5px;top:417px;line-height:13px">Scale</div>
 <div class="sunk" style="left:38px;top:411px;width:84px;height:19px"></div>
 <div class="a" style="left:43px;top:415px;line-height:13px">10 ms/Div</div>
 <div class="a" style="left:5px;top:436px;line-height:13px">X position</div>
 <div class="sunk" style="left:60px;top:432px;width:62px;height:19px"></div>
 <div class="a" style="left:65px;top:436px;line-height:13px">0</div>
 <div class="btn chk" style="left:6px;top:455px;width:25px;height:19px;box-shadow:inset 1px 1px #404040,inset -1px -1px #fff,inset 2px 2px #808080"></div>
 <div class="a" style="left:6px;top:455px;width:25px;line-height:19px;text-align:center">Y/T</div>
 <div class="btn" style="left:32px;top:455px;width:27px;height:19px"></div>
 <div class="a" style="left:32px;top:455px;width:27px;line-height:19px;text-align:center">Add</div>
 <div class="btn" style="left:60px;top:455px;width:29px;height:19px"></div>
 <div class="a" style="left:60px;top:455px;width:29px;line-height:19px;text-align:center">B/A</div>
 <div class="btn" style="left:89px;top:455px;width:28px;height:19px"></div>
 <div class="a" style="left:89px;top:455px;width:28px;line-height:19px;text-align:center">A/B</div>

 <!-- channel A -->
 <div class="a" style="left:130px;top:417px;line-height:13px">Scale</div>
 <div class="sunk" style="left:161px;top:411px;width:84px;height:19px"></div>
 <div class="a" style="left:166px;top:415px;line-height:13px">2&nbsp; V/Div</div>
 <div class="a" style="left:130px;top:436px;line-height:13px">Y position</div>
 <div class="sunk" style="left:183px;top:432px;width:62px;height:19px"></div>
 <div class="a" style="left:189px;top:436px;line-height:13px">0</div>
 <div class="btn" style="left:131px;top:455px;width:24px;height:19px"></div>
 <div class="a" style="left:131px;top:455px;width:24px;line-height:19px;text-align:center">AC</div>
 <div class="btn" style="left:155px;top:455px;width:23px;height:19px"></div>
 <div class="a" style="left:155px;top:455px;width:23px;line-height:19px;text-align:center">0</div>
 <div class="btn chk" style="left:179px;top:455px;width:25px;height:19px;box-shadow:inset 1px 1px #404040,inset -1px -1px #fff,inset 2px 2px #808080"></div>
 <div class="a" style="left:179px;top:455px;width:25px;line-height:19px;text-align:center">DC</div>
 <svg style="left:228px;top:457px" width="12" height="12"><circle cx="6" cy="6" r="4.5" fill="#d4d0c8" stroke="#808080"/><circle cx="6" cy="6" r="2" fill="#808080"/><path d="M9.5 3a4.6 4.6 0 0 1-6 6.5" stroke="#fff" fill="none"/></svg>

 <!-- channel B -->
 <div class="a" style="left:251px;top:417px;line-height:13px">Scale</div>
 <div class="sunk" style="left:285px;top:412px;width:86px;height:18px"></div>
 <div class="a" style="left:290px;top:415px;line-height:13px">2&nbsp; V/Div</div>
 <div class="a" style="left:251px;top:436px;line-height:13px">Y position</div>
 <div class="sunk" style="left:308px;top:432px;width:63px;height:19px"></div>
 <div class="a" style="left:313px;top:436px;line-height:13px">0</div>
 <div class="btn" style="left:252px;top:456px;width:24px;height:19px"></div>
 <div class="a" style="left:252px;top:456px;width:24px;line-height:19px;text-align:center">AC</div>
 <div class="btn" style="left:276px;top:456px;width:22px;height:19px"></div>
 <div class="a" style="left:276px;top:456px;width:22px;line-height:19px;text-align:center">0</div>
 <div class="btn chk" style="left:299px;top:456px;width:27px;height:19px;box-shadow:inset 1px 1px #404040,inset -1px -1px #fff,inset 2px 2px #808080"></div>
 <div class="a" style="left:299px;top:456px;width:27px;line-height:19px;text-align:center">DC</div>
 <div class="btn" style="left:326px;top:456px;width:19px;height:19px"></div>
 <div class="a" style="left:326px;top:456px;width:19px;line-height:19px;text-align:center">-</div>
 <svg style="left:360px;top:459px" width="12" height="12"><circle cx="6" cy="6" r="4.5" fill="#d4d0c8" stroke="#808080"/><circle cx="6" cy="6" r="2" fill="#808080"/><path d="M9.5 3a4.6 4.6 0 0 1-6 6.5" stroke="#fff" fill="none"/></svg>

 <!-- trigger -->
 <div class="a" style="left:379px;top:417px;line-height:13px">Edge</div>
 <div class="btn chk" style="left:420px;top:414px;width:21px;height:20px;box-shadow:inset 1px 1px #404040,inset -1px -1px #fff,inset 2px 2px #808080"></div>
 <div class="btn" style="left:441px;top:414px;width:22px;height:20px"></div>
 <svg style="left:420px;top:414px" width="50" height="20" shape-rendering="crispEdges"><path d="M6.5 13.5h4v-7h4M8 10.5h2.5M26.5 6.5h4v7h4M30.5 10.5h2.5" stroke="#000" fill="none"/></svg>
 <div class="btn chk" style="left:467px;top:414px;width:23px;height:20px;box-shadow:inset 1px 1px #404040,inset -1px -1px #fff,inset 2px 2px #808080"></div>
 <div class="a" style="left:467px;top:414px;width:23px;line-height:20px;text-align:center;color:#808080;text-shadow:1px 1px #fff">A</div>
 <div class="btn" style="left:491px;top:414px;width:23px;height:20px"></div>
 <div class="a" style="left:491px;top:414px;width:23px;line-height:20px;text-align:center;color:#808080;text-shadow:1px 1px #fff">B</div>
 <div class="btn" style="left:515px;top:414px;width:28px;height:20px"></div>
 <div class="a" style="left:515px;top:414px;width:28px;line-height:20px;text-align:center;color:#808080;text-shadow:1px 1px #fff">Ext</div>
 <div class="a" style="left:379px;top:437px;line-height:13px">Level</div>
 <div class="sunk" style="left:420px;top:435px;width:90px;height:19px"></div>
 <div class="a" style="left:425px;top:438px;line-height:13px">0</div>
 <div class="sunk" style="left:510px;top:435px;width:33px;height:19px"></div>
 <div class="a" style="left:517px;top:438px;line-height:13px">V</div>
 <div class="a" style="left:380px;top:458px;line-height:13px">Type</div>
 <div class="btn" style="left:410px;top:455px;width:33px;height:18px"></div>
 <div class="a" style="left:410px;top:455px;width:33px;line-height:18px;text-align:center">Sing.</div>
 <div class="btn" style="left:443px;top:455px;width:33px;height:18px"></div>
 <div class="a" style="left:443px;top:455px;width:33px;line-height:18px;text-align:center">Nor.</div>
 <div class="btn" style="left:476px;top:455px;width:33px;height:18px"></div>
 <div class="a" style="left:476px;top:455px;width:33px;line-height:18px;text-align:center">Auto</div>
 <div class="btn chk" style="left:510px;top:455px;width:34px;height:18px;box-shadow:inset 1px 1px #404040,inset -1px -1px #fff,inset 2px 2px #808080"></div>
 <div class="a" style="left:510px;top:455px;width:34px;line-height:18px;text-align:center">None</div>
</div>

<!-- ===== TASKBAR ===== -->
<div class="a" style="left:0;top:995px;width:1280px;height:29px;background:#d4d0c8;box-shadow:inset 0 1px #fff"></div>
<div class="btn" style="left:2px;top:998px;width:51px;height:22px"></div>
<svg style="left:4px;top:1000px" width="17" height="16" shape-rendering="auto">
 <path d="M2 2.5c2-1 4-1 6 0v5.5c-2-1-4-1-6 0z" fill="#f25a1b"/>
 <path d="M9 2.5c2 1 4 1 6 0v5.5c-2 1-4 1-6 0z" fill="#5fb82e"/>
 <path d="M1 9c2-1 4-1 6 0v5.5c-2-1-4-1-6 0z" fill="#3d8ee6"/>
 <path d="M8 9c2 1 4 1 6 0v5.5c-2 1-4 1-6 0z" fill="#f9c21a"/>
</svg>
<div class="a" style="left:22px;top:1002px;font-weight:bold;font-size:12px;line-height:14px;letter-spacing:0.2px">Пуск</div>
<div class="a" style="left:60px;top:999px;width:3px;height:21px;box-shadow:inset 1px 1px #808080,inset -1px -1px #fff"></div>
<svg style="left:68px;top:1000px" width="70" height="18" shape-rendering="auto">
 <rect x="2" y="2" width="14" height="14" rx="3" fill="#3a78d8"/><path d="M5 6c2-2 6-2 8 0v6c-2 2-6 2-8 0z" fill="#fff"/><path d="M6 10h6M8 7l-2 3 2 3" stroke="#3a78d8" fill="none"/>
 <rect x="26" y="2" width="12" height="14" fill="#fff" stroke="#808080"/><rect x="27" y="9" width="10" height="6" fill="#5ab94c"/><path d="M34 13l6-11" stroke="#e8a820" stroke-width="2"/>
 <circle cx="56" cy="9" r="7" fill="none" stroke="#3a8fd8" stroke-width="2.5"/><path d="M56 2a7 7 0 0 1 7 7" stroke="#5fb82e" stroke-width="2.5" fill="none"/><path d="M63 9a7 7 0 0 1-7 7" stroke="#f0b020" stroke-width="2.5" fill="none"/><path d="M54 6v6l5-3z" fill="#000"/>
</svg>
<div class="a" style="left:146px;top:999px;width:3px;height:21px;box-shadow:inset 1px 1px #808080,inset -1px -1px #fff"></div>
<div class="btn" style="left:152px;top:998px;width:160px;height:22px"></div>
<svg style="left:156px;top:1002px" width="17" height="14" shape-rendering="auto"><path d="M1 3h5l2 2h8v8h-15z" fill="#e8c048" stroke="#a88418" stroke-width=".8"/><path d="M1 6h15v7h-15z" fill="#f8dc70"/></svg>
<div class="a" style="left:175px;top:1003px;line-height:13px">Z:\del</div>
<div class="a chk" style="left:315px;top:998px;width:160px;height:22px;box-shadow:inset 1px 1px #404040,inset -1px -1px #fff,inset 2px 2px #808080"></div>
<svg style="left:320px;top:1003px" width="17" height="13" shape-rendering="auto"><path d="M1 9l6-7M4 11l6-7M7 12l6-7M10 12l5-6M2 5l11 6" stroke="#2040a0" stroke-width="1.5" fill="none"/></svg>
<div class="a" style="left:340px;top:1003px;line-height:13px;font-weight:bold;letter-spacing:0.3px">Circuit1 - Multisim - [...</div>
<div class="a" style="left:1153px;top:999px;width:3px;height:21px;box-shadow:inset 1px 1px #808080,inset -1px -1px #fff"></div>
<div class="a" style="left:1198px;top:998px;width:80px;height:24px;box-shadow:inset 1px 1px #808080,inset -1px -1px #fff"></div>
<svg style="left:1201px;top:1002px" width="34" height="17" shape-rendering="auto">
 <circle cx="7" cy="7" r="6" fill="#606060"/><circle cx="7" cy="7" r="3" fill="#b0b0b0"/><path d="M12 13c2-1 3-2 4-4M13 15c2-1 4-3 5-5" stroke="#8888ff" fill="none"/>
 <path d="M20 4l6-3 6 3v8l-6 4-6-4z" fill="#1e4a90"/><path d="M20 4l6 3 6-3M26 7v9" stroke="#aac8f0" fill="none"/><path d="M28 10l1.5 3 3 .5-2 2 .5 3-3-1.5z" fill="#f8b818"/>
</svg>
<div class="a" style="left:1242px;top:1003px;line-height:13px">13:41</div>
</body></html>
